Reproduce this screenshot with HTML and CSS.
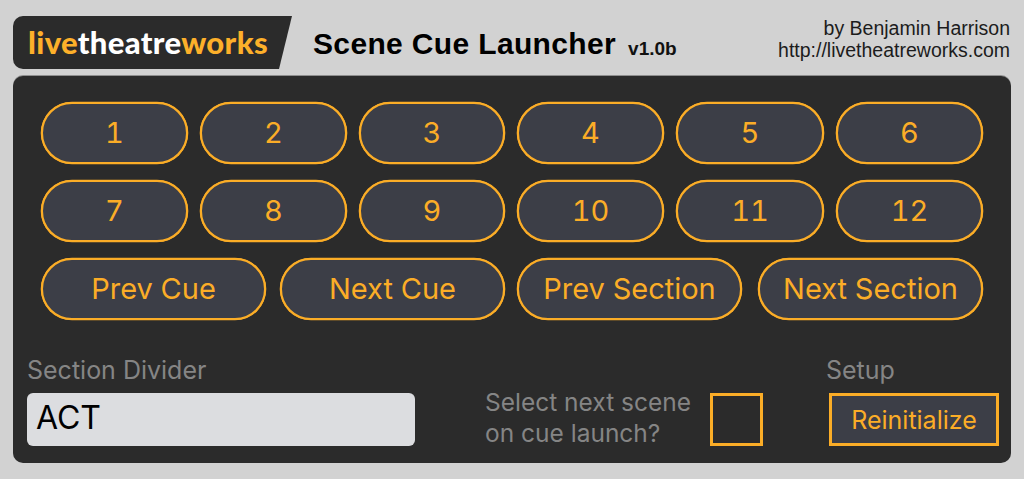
FILE: index.html
```html
<!DOCTYPE html>
<html lang="en">
<head>
    <meta charset="UTF-8">
    <meta name="viewport" content="width=device-width, initial-scale=1.0">
    <title>Scene Cue Launcher</title>
    <link rel="stylesheet" href="styles.css">
</head>
<body>
    <header class="top">
        <div class="logo"><span class="amber">live</span><span class="white">theatre</span><span class="amber">works</span></div>
        <h1 class="title">Scene Cue Launcher</h1>
        <span class="version">v1.0b</span>
        <div class="credit">by Benjamin Harrison<br>http://livetheatreworks.com</div>
    </header>
    <main class="panel">
        <div class="cues">
            <button class="pill">1</button>
            <button class="pill">2</button>
            <button class="pill">3</button>
            <button class="pill">4</button>
            <button class="pill">5</button>
            <button class="pill">6</button>
            <button class="pill">7</button>
            <button class="pill">8</button>
            <button class="pill">9</button>
            <button class="pill">10</button>
            <button class="pill">11</button>
            <button class="pill">12</button>
        </div>
        <div class="nav">
            <button class="pill">Prev Cue</button>
            <button class="pill">Next Cue</button>
            <button class="pill">Prev Section</button>
            <button class="pill">Next Section</button>
        </div>
        <div class="bottom">
            <div class="divider">
                <label class="label">Section Divider</label>
                <div class="field">ACT</div>
            </div>
            <div class="select-next">
                <div class="select-text">Select next scene<br>on cue launch?</div>
                <div class="check"></div>
            </div>
            <div class="setup">
                <label class="label">Setup</label>
                <button class="reinit">Reinitialize</button>
            </div>
        </div>
    </main>
</body>
</html>
```

FILE: styles.css
```css
body {
    margin: 0;
    width: 1024px;
    height: 479px;
    overflow: hidden;
    background: #d2d2d2;
    font-family: 'Inter', sans-serif;
}
.top {
    display: flex;
    align-items: flex-start;
    height: 60px;
    padding: 16px 14px 0 13px;
}
.logo {
    flex-shrink: 0;
    width: 279px;
    height: 53px;
    line-height: 52px;
    padding-left: 15px;
    box-sizing: border-box;
    background: #2b2b2b;
    border-radius: 10px 0 0 10px;
    clip-path: polygon(0 0, 100% 0, 266px 100%, 0 100%);
    font-family: 'Lato', sans-serif;
    font-size: 31px;
    letter-spacing: 0.35px;
    font-weight: 900;
    white-space: nowrap;
}
.amber {
    color: #fdb02a;
}
.white {
    color: #ffffff;
}
.title {
    margin: 9px 0 0 21px;
    font-family: 'Liberation Sans', sans-serif;
    font-size: 30px;
    line-height: 38px;
    letter-spacing: 0.35px;
    color: #000;
}
.version {
    margin: 21px 0 0 12px;
    font-family: 'Liberation Sans', sans-serif;
    font-size: 19px;
    line-height: 24px;
    font-weight: bold;
    color: #111;
}
.credit {
    margin: 1px 0 0 auto;
    font-family: 'Liberation Sans', sans-serif;
    font-size: 19.5px;
    line-height: 22px;
    text-align: right;
    color: #1c1c1c;
}
.panel {
    margin-left: 13px;
    width: 998px;
    height: 387px;
    padding: 26px 28px 0;
    box-sizing: border-box;
    background: #2b2b2b;
    border-radius: 10px;
    box-shadow: 0 -1px 0 #8f8f8f;
}
.cues {
    display: grid;
    grid-template-columns: 147px 147px 146px 147px 148px 147px;
    column-gap: 12px;
    row-gap: 16px;
}
.nav {
    display: grid;
    grid-template-columns: 239px 237px 241px 225px;
    margin-top: 16px;
}
.nav .pill {
    width: 225px;
}
.pill {
    height: 62px;
    background: #3c3e47;
    border: 2px solid #fbad27;
    box-shadow: 0 0 0 0.3px #fbad27;
    border-radius: 31px;
    color: #fbad27;
    font-family: 'Inter', sans-serif;
    font-size: 29px;
    font-variant-numeric: tabular-nums;
    padding: 0 0 2px;
}
.bottom {
    display: flex;
    margin: 36px -14px 0;
}
.label {
    display: block;
    font-size: 25px;
    line-height: 29px;
    color: #858585;
}
.divider {
    flex-shrink: 0;
    width: 388px;
}
.field {
    margin-top: 8px;
    height: 53px;
    line-height: 49px;
    padding-left: 9px;
    background: #dcdde0;
    border-radius: 6px;
    font-size: 32px;
    color: #000;
}
.select-next {
    display: flex;
    flex-shrink: 0;
    margin: 37px 0 0 70px;
}
.select-text {
    width: 225px;
    margin-top: -6px;
    font-size: 24.5px;
    line-height: 31px;
    color: #858585;
}
.check {
    width: 53px;
    height: 53px;
    box-sizing: border-box;
    border: 3px solid #fbad27;
}
.setup {
    flex-shrink: 0;
    margin-left: 63px;
}
.reinit {
    display: block;
    margin: 8px 0 0 3px;
    width: 170px;
    height: 53px;
    background: #3c3e47;
    border: 3px solid #fbad27;
    color: #fbad27;
    font-family: 'Inter', sans-serif;
    font-size: 25px;
    padding: 0;
}
```
